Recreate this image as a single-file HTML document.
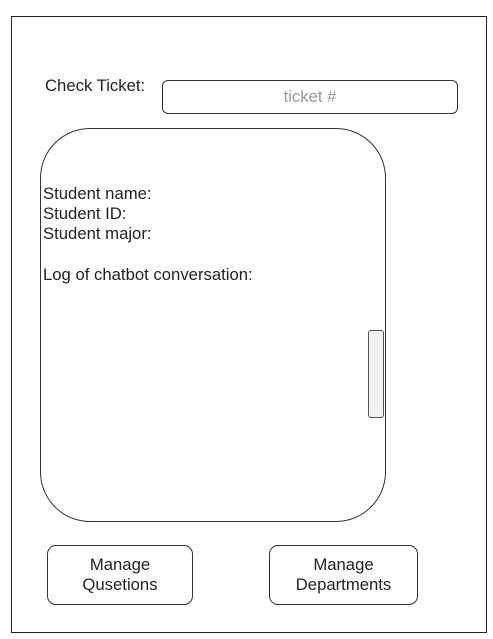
<!DOCTYPE html>
<html><head><style>
body{margin:0;width:493px;height:639px;background:#fff;position:relative;font-family:"Liberation Sans",Arial,sans-serif;color:#222;overflow:hidden}
div{position:absolute;box-sizing:border-box}
.t{font-size:16.7px;white-space:nowrap;line-height:20px}
.b{border:1.3px solid #333;border-radius:9px;text-align:center;font-size:16.7px;line-height:20px;padding-top:9px}
</style></head><body>
<div style="left:11px;top:16px;width:476px;height:617px;border:1.5px solid #222"></div>
<div class="t" style="left:45px;top:76px">Check Ticket:</div>
<div style="left:162px;top:80px;width:296px;height:34px;border:1.3px solid #333;border-radius:6px;color:#999;font-size:16.7px;text-align:center;line-height:31px">ticket #</div>
<div style="left:40px;top:128px;width:346px;height:394px;border:1.3px solid #333;border-radius:50px"></div>
<div style="left:368px;top:330px;width:16px;height:88px;border:1px solid #555;border-radius:3px;background:#f2f2f2"></div>
<div class="t" style="left:43px;top:184px">Student name:<br>Student ID:<br>Student major:</div>
<div class="t" style="left:43px;top:265px">Log of chatbot conversation:</div>
<div class="b" style="left:47px;top:545px;width:146px;height:60px">Manage<br>Qusetions</div>
<div class="b" style="left:269px;top:545px;width:149px;height:60px">Manage<br>Departments</div>
</body></html>
